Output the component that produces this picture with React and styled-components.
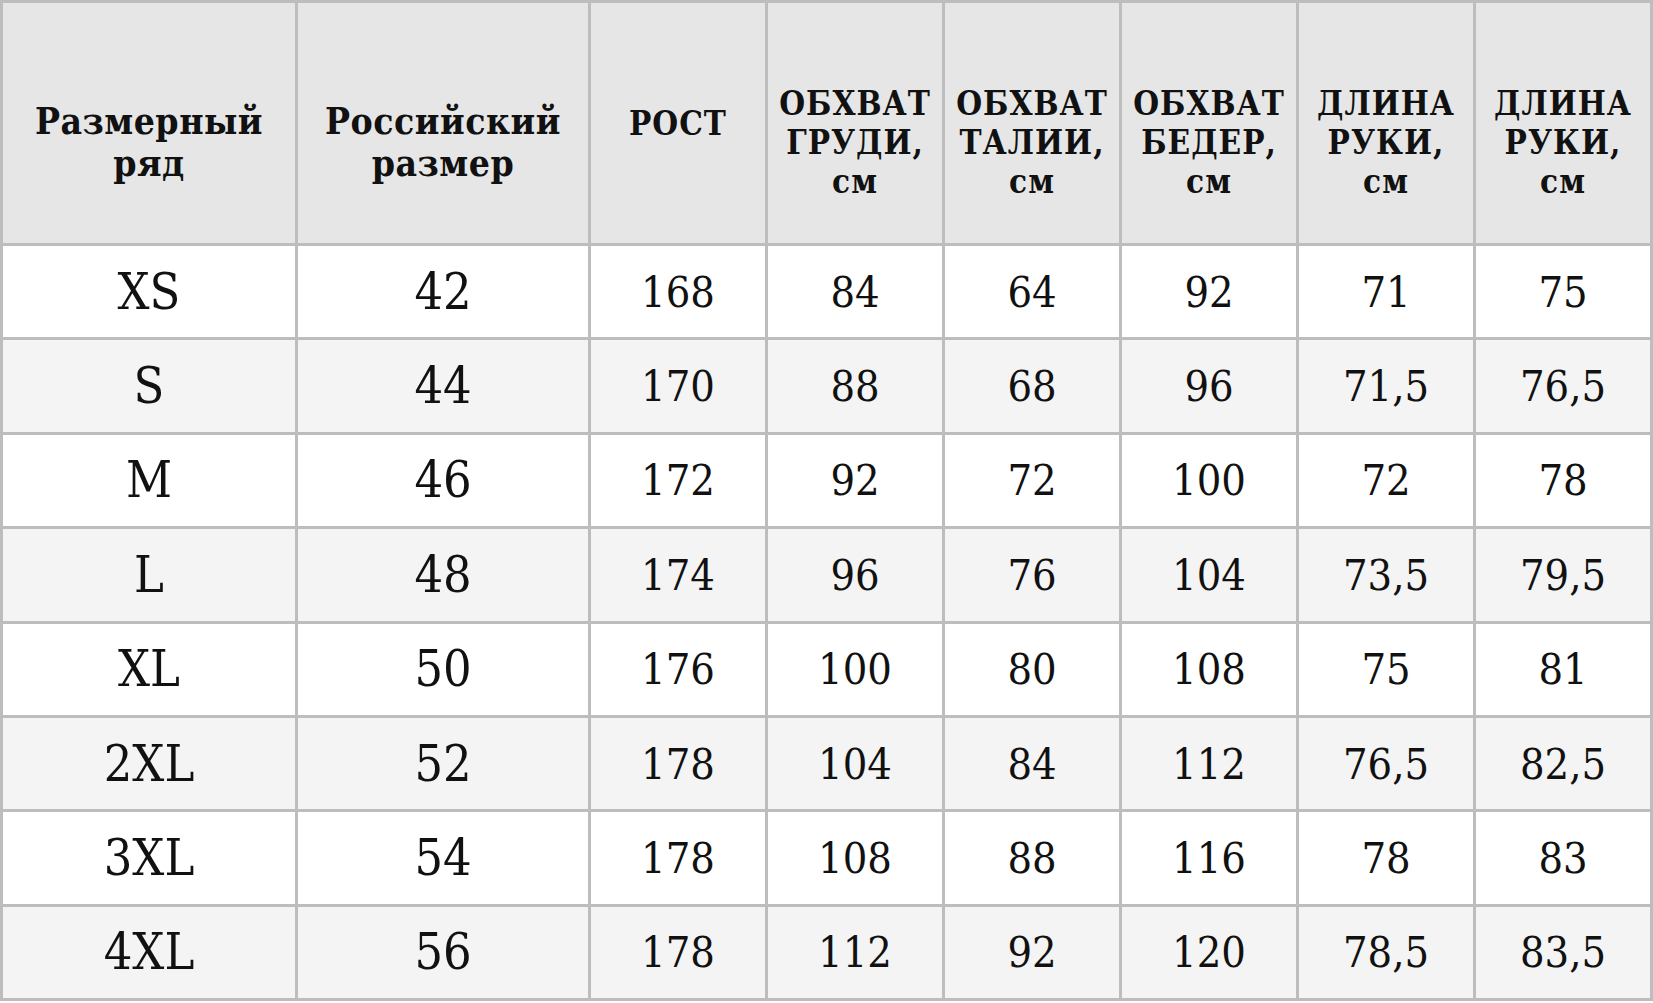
import React from "react";
import styled, { createGlobalStyle } from "styled-components";

const GlobalStyle = createGlobalStyle`
  html, body {
    margin: 0;
    padding: 0;
    background: #ffffff;
  }
`;

const SizeTable = styled.table`
  width: 1653px;
  border-collapse: collapse;
  table-layout: fixed;
  font-family: "DejaVu Serif", "Liberation Serif", serif;
  font-stretch: condensed;
  color: #111;
`;

const HeadRow = styled.tr`
  height: 243px;
  background: #e6e6e6;
`;

const HeadCell = styled.th`
  border: 3px solid #bdbdbd;
  padding: ${(props) => (props.$multi ? "38px 4px 0" : "0 4px")};
  text-align: center;
  vertical-align: middle;
  font-weight: 700;
  font-size: ${(props) => (props.$big ? "37px" : "33px")};
  line-height: ${(props) => (props.$big ? "42px" : "39px")};
  letter-spacing: ${(props) => (props.$big ? "0.5px" : "1px")};
`;

const Row = styled.tr`
  height: 94.4px;
  background: ${(props) => (props.$shade ? "#f4f4f4" : "#ffffff")};
`;

const Cell = styled.td`
  border: 3px solid #bdbdbd;
  padding: 0;
  text-align: center;
  vertical-align: middle;
  font-weight: 400;
  font-size: ${(props) => (props.$big ? "50px" : "43px")};
`;

const headers = [
  { text: ["Размерный", "ряд"], big: true, width: 295 },
  { text: ["Российский", "размер"], big: true, width: 293 },
  { text: ["РОСТ"], width: 177 },
  { text: ["ОБХВАТ", "ГРУДИ,", "см"], width: 177 },
  { text: ["ОБХВАТ", "ТАЛИИ,", "см"], width: 177 },
  { text: ["ОБХВАТ", "БЕДЕР,", "см"], width: 177 },
  { text: ["ДЛИНА", "РУКИ,", "см"], width: 177 },
  { text: ["ДЛИНА", "РУКИ,", "см"], width: 177 },
];

const rows = [
  ["XS", "42", "168", "84", "64", "92", "71", "75"],
  ["S", "44", "170", "88", "68", "96", "71,5", "76,5"],
  ["M", "46", "172", "92", "72", "100", "72", "78"],
  ["L", "48", "174", "96", "76", "104", "73,5", "79,5"],
  ["XL", "50", "176", "100", "80", "108", "75", "81"],
  ["2XL", "52", "178", "104", "84", "112", "76,5", "82,5"],
  ["3XL", "54", "178", "108", "88", "116", "78", "83"],
  ["4XL", "56", "178", "112", "92", "120", "78,5", "83,5"],
];

const App = () => {
  return (
    <>
      <GlobalStyle />
      <SizeTable>
        <colgroup>
          {headers.map((h, i) => (
            <col key={i} style={{ width: h.width }} />
          ))}
        </colgroup>
        <thead>
          <HeadRow>
            {headers.map((h, i) => (
              <HeadCell key={i} $big={h.big} $multi={h.text.length > 1}>
                {h.text.map((line, j) => (
                  <React.Fragment key={j}>
                    {j > 0 && <br />}
                    {line}
                  </React.Fragment>
                ))}
              </HeadCell>
            ))}
          </HeadRow>
        </thead>
        <tbody>
          {rows.map((row, i) => (
            <Row key={i} $shade={i % 2 === 1}>
              {row.map((value, j) => (
                <Cell key={j} $big={j < 2}>
                  {value}
                </Cell>
              ))}
            </Row>
          ))}
        </tbody>
      </SizeTable>
    </>
  );
};

export default App;
